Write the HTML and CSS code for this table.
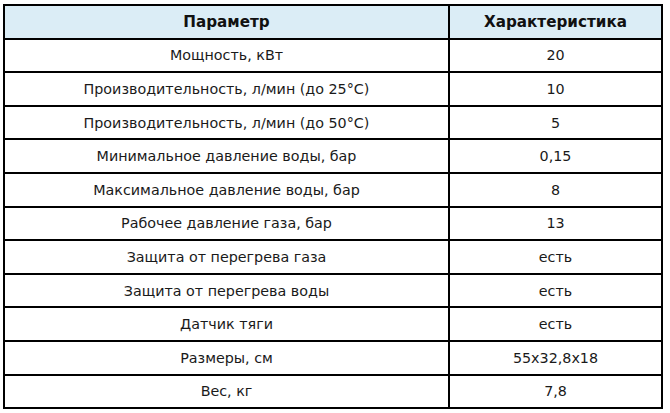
FILE: index.html
```html
<!DOCTYPE html>
<html lang="ru">
<head>
<meta charset="utf-8">
<link rel="stylesheet" href="styles.css">
</head>
<body>
<table class="spec">
  <thead>
    <tr><th class="c1">Параметр</th><th class="c2">Характеристика</th></tr>
  </thead>
  <tbody>
    <tr><td>Мощность, кВт</td><td>20</td></tr>
    <tr><td>Производительность, л/мин (до 25°С)</td><td>10</td></tr>
    <tr><td>Производительность, л/мин (до 50°С)</td><td>5</td></tr>
    <tr><td>Минимальное давление воды, бар</td><td>0,15</td></tr>
    <tr><td>Максимальное давление воды, бар</td><td>8</td></tr>
    <tr><td>Рабочее давление газа, бар</td><td>13</td></tr>
    <tr><td>Защита от перегрева газа</td><td>есть</td></tr>
    <tr><td>Защита от перегрева воды</td><td>есть</td></tr>
    <tr><td>Датчик тяги</td><td>есть</td></tr>
    <tr><td>Размеры, см</td><td>55x32,8x18</td></tr>
    <tr><td>Вес, кг</td><td>7,8</td></tr>
  </tbody>
</table>
</body>
</html>
```

FILE: styles.css
```css
html, body {
  margin: 0;
  padding: 0;
  background: #ffffff;
}
body {
  padding: 4px 0 0 3px;
  font-family: "DejaVu Sans", Verdana, sans-serif;
  font-size: 14.3px;
  color: #1a1a1a;
}
.spec {
  border-collapse: collapse;
  width: 660px;
}
.spec th, .spec td {
  border: 2px solid #000;
  text-align: center;
  vertical-align: middle;
  height: 31.6px;
  padding: 0;
}
.spec th {
  background: #dbedf6;
  font-weight: bold;
  font-size: 15.2px;
  color: #111;
}
.spec .c1 { width: 443px; }
```
